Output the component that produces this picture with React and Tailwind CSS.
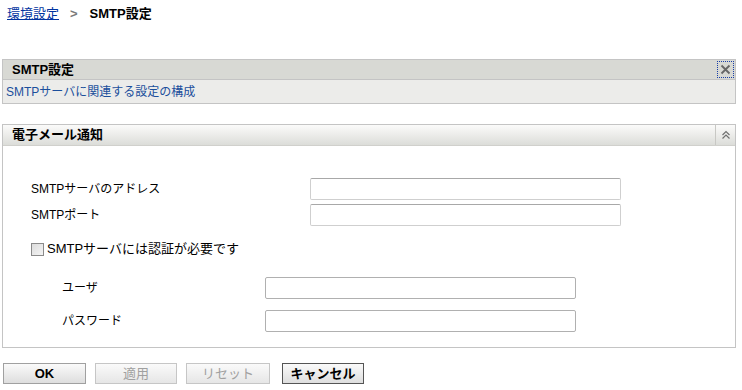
export default function App() {
  const font = { fontFamily: '"Liberation Sans", "Noto Sans CJK JP", sans-serif' };
  return (
    <div className="w-[742px] h-[390px] bg-white text-[12px] text-black overflow-hidden" style={font}>
      <div className="flex items-center h-[26px] pl-[7px] pt-[2px]">
        <a className="text-[#0033a0] underline text-[13px] cursor-pointer">環境設定</a>
        <span className="ml-[11px] mr-[12px] text-[#7a7a7a] font-bold text-[13px]">&gt;</span>
        <span className="font-bold text-[13px]">SMTP設定</span>
      </div>

      <div className="mt-[33px] ml-[2px] w-[734px] border border-[#c4c4c4]">
        <div className="flex items-center justify-between h-[20px] bg-[#d8d9d4] border-b border-[#c4c4c4] pl-[9px] pr-[1px]">
          <span className="font-bold text-[13px]">SMTP設定</span>
          <span className="flex items-center justify-center w-[17px] h-[17px] border border-dotted border-[#1a3fa8]">
            <svg width="11" height="11" viewBox="0 0 11 11">
              <path d="M1.5 1.5L9.5 9.5M9.5 1.5L1.5 9.5" stroke="#666" strokeWidth="1.8" />
            </svg>
          </span>
        </div>
        <div className="h-[23px] bg-[#ececea] flex items-center pl-[3px] text-[#1b4f9c]">
          SMTPサーバに関連する設定の構成
        </div>
      </div>

      <div className="mt-[20px] ml-[2px] w-[734px] h-[224px] border border-[#c4c4c4] flex flex-col">
        <div className="flex items-center justify-between h-[21px] bg-gradient-to-b from-[#fbfbfa] to-[#dcddd9] border-b border-[#d0d0cc]">
          <span className="pl-[9px] font-bold text-[13px]">電子メール通知</span>
          <span className="flex items-center justify-center w-[20px] h-full border-l border-[#c8c8c4]">
            <svg width="10" height="10" viewBox="0 0 10 10">
              <path d="M1.5 5L5 1.5L8.5 5M1.5 8.5L5 5L8.5 8.5" stroke="#707070" strokeWidth="1.2" fill="none" />
            </svg>
          </span>
        </div>

        <div className="flex flex-col pt-[32px]">
          <div className="flex items-center h-[22px]">
            <span className="w-[307px] pl-[28px]">SMTPサーバのアドレス</span>
            <div className="w-[311px] h-[22px] border border-[#cfcfcf] border-t-[#a8a8a8] rounded-[2px] bg-white" />
          </div>
          <div className="flex items-center h-[22px] mt-[4px]">
            <span className="w-[307px] pl-[28px]">SMTPポート</span>
            <div className="w-[311px] h-[22px] border border-[#cfcfcf] border-t-[#a8a8a8] rounded-[2px] bg-white" />
          </div>

          <div className="flex items-center mt-[15px] pl-[28px] h-[16px]">
            <span className="w-[13px] h-[13px] border border-[#8a8a8a] bg-gradient-to-br from-[#dcdcdc] to-[#f4f4f4]" />
            <span className="ml-[3px] text-[13px]">SMTPサーバには認証が必要です</span>
          </div>

          <div className="flex items-center h-[22px] mt-[20px]">
            <span className="w-[262px] pl-[59px]">ユーザ</span>
            <div className="w-[311px] h-[22px] border border-[#b0b0b0] rounded-[2px] bg-white" />
          </div>
          <div className="flex items-center h-[22px] mt-[11px]">
            <span className="w-[262px] pl-[59px]">パスワード</span>
            <div className="w-[311px] h-[22px] border border-[#b0b0b0] rounded-[2px] bg-white" />
          </div>
        </div>
      </div>

      <div className="flex items-center mt-[15px] ml-[3px] gap-[9px]">
        <button className="w-[83px] h-[21px] border border-[#a0a0a0] bg-gradient-to-b from-[#fafafa] to-[#dedede] font-bold text-[13px]">OK</button>
        <button className="w-[82px] h-[21px] border border-[#c6c6c6] bg-gradient-to-b from-[#fafafa] to-[#e6e6e6] text-[#a0a0a0] text-[13px]">適用</button>
        <button className="w-[84px] h-[21px] border border-[#c6c6c6] bg-gradient-to-b from-[#fafafa] to-[#e6e6e6] text-[#a0a0a0] text-[13px]">リセット</button>
        <button className="ml-[3px] w-[82px] h-[21px] border border-[#555] bg-gradient-to-b from-[#fafafa] to-[#dedede] font-bold text-[13px]">キャンセル</button>
      </div>
    </div>
  );
}
